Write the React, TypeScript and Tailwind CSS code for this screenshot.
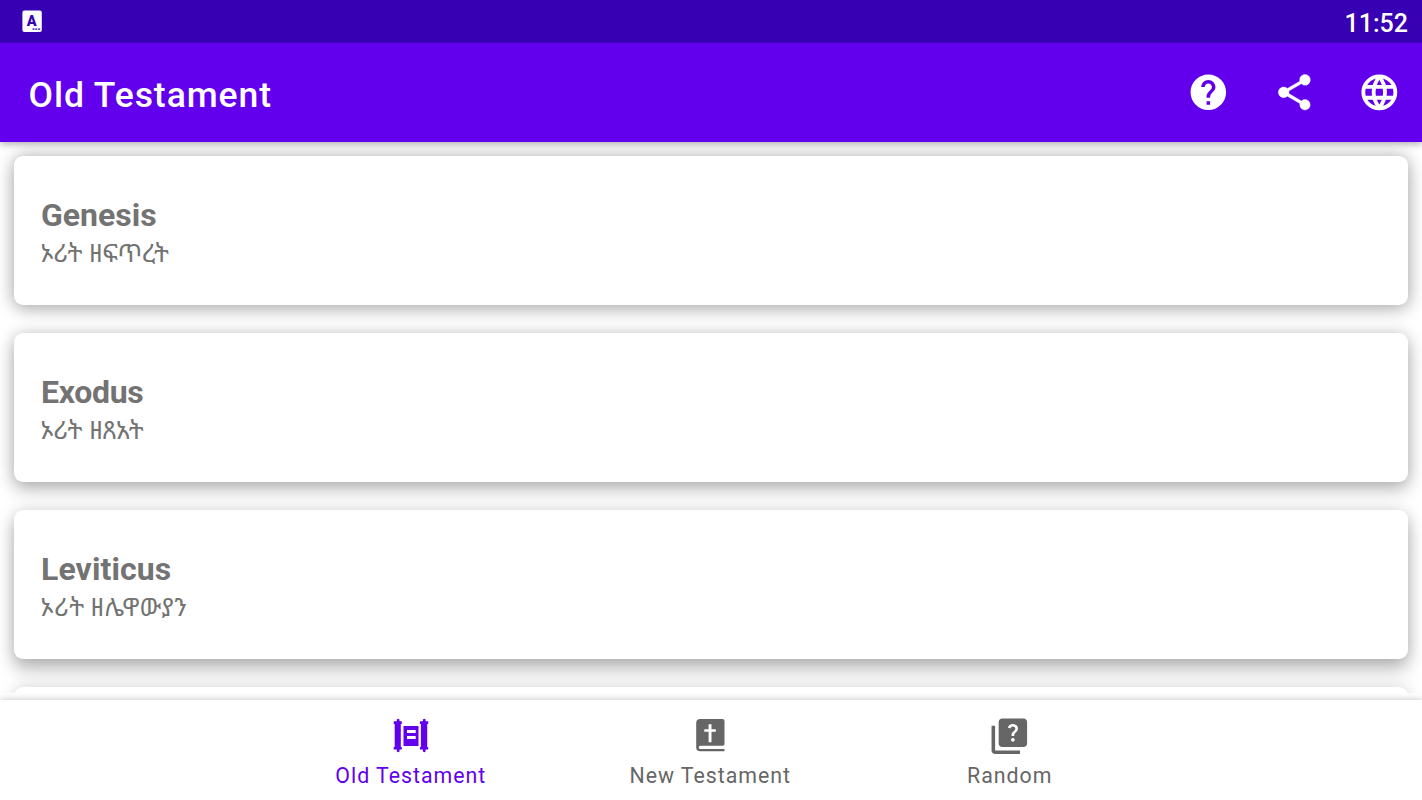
import React from "react";
import { MdHelp, MdQuiz } from "react-icons/md";

const books = [
  { title: "Genesis", subtitle: "ኦሪት ዘፍጥረት", titleTracking: "", tracking: "tracking-[-0.3px] [word-spacing:1px]", shadow: "shadow-[0_6px_18px_rgba(0,0,0,0.15),0_0px_17px_rgba(0,0,0,0.27)]" },
  { title: "Exodus", subtitle: "ኦሪት ዘጸአት", titleTracking: "tracking-[-0.3px]", tracking: "tracking-[-0.25px] [word-spacing:1px]", shadow: "shadow-[0_10px_18px_rgba(0,0,0,0.17),0_1px_16px_rgba(0,0,0,0.24)]" },
  { title: "Leviticus", subtitle: "ኦሪት ዘሌዋውያን", titleTracking: "tracking-[0.1px]", tracking: "tracking-[0.6px] [word-spacing:-1px]", shadow: "shadow-[0_13px_18px_rgba(0,0,0,0.18),0_2px_16px_rgba(0,0,0,0.22)]" },
];

function ShareIcon() {
  return (
    <svg width="42.67" height="42.67" viewBox="0 0 24 24" fill="currentColor" stroke="currentColor" strokeWidth="0.2">
      <path d="M18 16.080c-.76 0-1.440.3-1.960.77L8.910 12.700c.05-.23.09-.46.09-.7s-.04-.47-.09-.7l7.050-4.110c.54.5 1.250.81 2.040.81 1.660 0 3-1.340 3-3s-1.340-3-3-3-3 1.340-3 3c0 .24.04.47.09.7L8.040 9.810C7.500 9.310 6.790 9 6 9c-1.660 0-3 1.340-3 3s1.340 3 3 3c.79 0 1.500-.31 2.040-.81l7.120 4.160c-.05.21-.08.43-.08.65 0 1.610 1.310 2.920 2.920 2.920s2.920-1.310 2.920-2.920-1.310-2.920-2.920-2.920z" />
    </svg>
  );
}

function GlobeIcon() {
  return (
    <svg width="42.67" height="42.67" viewBox="0 0 24 24" fill="none" stroke="currentColor" strokeWidth="2.150" strokeLinejoin="bevel">
      <circle cx="12" cy="12" r="9" />
      <path d="M12 3.200C9.800 6 8.800 9 8.800 12s1 6 3.200 8.800c2.200-2.800 3.200-5.800 3.200-8.800S14.200 6 12 3.200z" />
      <path d="M4 8.950h16M4 15.050h16" />
    </svg>
  );
}

function ScrollIcon() {
  return (
    <svg width="36" height="36" viewBox="0 0 36 36" fill="currentColor">
      <path d="M3.800 1.500 5 .8h.3l1.200.7v1.700h2.300v2.700h-1v23h1v2.700H6.500v1.900l-1.200.8H5l-1.200-.8v-1.900H.7v-2.700h1v-23h-1V3.200h3.100z" />
      <path d="M29.900 1.500 31.100.8h.3l1.200.7v1.700h2.600v2.700h-1v23h1v2.700h-2.600v1.900l-1.200.8h-.3l-1.200-.8v-1.900h-3v-2.700h1v-23h-1V3.200h3z" />
      <path fillRule="evenodd" d="M10.500 8h15v20h-15zM14 12.100v3h8.700v-3zM14 18v3h8.700v-3z" />
    </svg>
  );
}

function BibleIcon() {
  return (
    <svg width="36" height="36" viewBox="0 0 36 36" fill="currentColor">
      <path
        fillRule="evenodd"
        d="M8.200 .9h22.200q2.100 0 2.100 2.100v23q0 1.700-1.600 1.700H8.500q-1.700 0-1.700 1.700t1.700 1.700h24v2.200H8.200Q4.200 33.300 4.200 29.500V4.900q0-4 4-4zM16.600 6.300v4.900h-4.300v2.600h4.300v10.400h2.900V13.800h4.300v-2.600h-4.300V6.300z"
      />
    </svg>
  );
}

function KeyboardIcon() {
  return (
    <svg width="20" height="22" viewBox="0 0 20 22">
      <rect x=".4" y="0.500" width="19.400" height="21.400" rx="2" fill="white" />
      <text x="9.800" y="15.800" textAnchor="middle" fontFamily="Roboto, sans-serif" fontWeight="900" fontSize="14.500" fill="#3700b3">A</text>
      <path d="M10.500 18.200h2v1.800h-2zM13.300 18.200h2v1.800h-2zM16.200 18.200h2v1.800h-2z" fill="#3700b3" opacity=".75" />
    </svg>
  );
}

const tabs = [
  { label: "Old Testament", icon: <ScrollIcon />, color: "text-[#6200ee]" },
  { label: "New Testament", icon: <BibleIcon />, color: "text-[#666666]" },
  { label: "Random", icon: <MdQuiz size={42.67} />, color: "text-[#666666]" },
];

export default function App() {
  return (
    <div className="flex h-[800px] w-[1422px] flex-col overflow-hidden bg-white font-[Roboto,'Noto_Sans_Ethiopic',sans-serif]">
      <div className="z-20 flex h-[42.500px] shrink-0 items-center justify-between bg-[#3700b3] pr-[14px] pl-[22px] text-white">
        <KeyboardIcon />
        <span className="pt-[4px] text-[25px] leading-none font-medium">11:52</span>
      </div>
      <header className="z-10 flex h-[99.500px] shrink-0 items-center justify-between bg-[#6200ee] pr-[21.500px] pl-[28.500px] text-white shadow-[0_2px_7px_rgba(0,0,0,0.32)]">
        <h1 className="pt-[7px] text-[35.56px] leading-none font-medium tracking-[0.92px]">Old Testament</h1>
        <div className="flex items-center gap-[42.67px]">
          <MdHelp size={42.67} />
          <ShareIcon />
          <GlobeIcon />
        </div>
      </header>
      <main className="flex h-[551px] shrink-0 flex-col gap-[28px] overflow-hidden px-[14px] pt-[14px]">
        {books.map((b) => (
          <article key={b.title} className={`h-[149px] shrink-0 rounded-[9px] bg-white pt-[40px] pl-[27px] text-[#737373] ${b.shadow}`}>
            <h2 className={`text-[32px] leading-[38px] font-bold ${b.titleTracking}`}>{b.title}</h2>
            <p className={`mt-[2px] -ml-[0.500px] text-[24.900px] leading-[36px] ${b.tracking}`}>{b.subtitle}</p>
          </article>
        ))}
        <article className="h-[149px] shrink-0 rounded-[9px] bg-white shadow-[0_2px_16px_rgba(0,0,0,0.22)]" />
      </main>
      <div className="h-[7px] shrink-0 bg-white" />
      <nav className="z-10 flex h-[100px] shrink-0 justify-center bg-white pr-[1.500px] shadow-[0_0_7px_rgba(0,0,0,0.25)]">
        {tabs.map((t) => (
          <div key={t.label} className={`flex w-[299.500px] flex-col items-center ${t.color}`}>
            <div className="mt-[14.500px] flex h-[43px] items-center">{t.icon}</div>
            <span className="mt-[5px] text-[21.330px] leading-[26px] tracking-[0.980px]">{t.label}</span>
          </div>
        ))}
      </nav>
    </div>
  );
}
